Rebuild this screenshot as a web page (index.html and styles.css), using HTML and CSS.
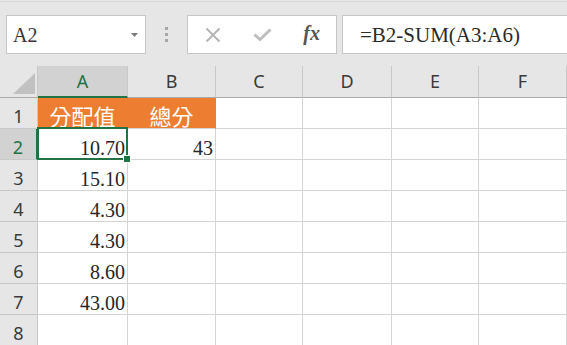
FILE: index.html
```html
<!DOCTYPE html>
<html lang="zh-Hant">
<head>
<meta charset="utf-8">
<title>Excel</title>
<link rel="stylesheet" href="styles.css">
</head>
<body>
<div class="app">
  <div class="fbar">
    <div class="namebox">
      <span class="namebox-text">A2</span>
      <svg class="dd" width="7" height="4" viewBox="0 0 7 4"><path d="M0 0H7L3.5 4Z" fill="#7a7a7a"/></svg>
    </div>
    <div class="grip"><i></i><i></i><i></i></div>
    <div class="btnbox">
      <span class="btn">
        <svg width="16" height="16" viewBox="0 0 16 16"><path d="M1.5 1.5L14.5 14.5M14.5 1.5L1.5 14.5" stroke="#b3b3b3" stroke-width="1.8" fill="none"/></svg>
      </span>
      <span class="btn">
        <svg width="19" height="14" viewBox="0 0 19 14"><path d="M1.5 6.5L7 11.5L17.5 1.5" stroke="#bdbdbd" stroke-width="3" fill="none"/></svg>
      </span>
      <span class="btn fx">fx</span>
    </div>
    <div class="formula">=B2-SUM(A3:A6)</div>
  </div>
  <div class="sheet">
    <div class="corner"><svg width="22" height="21" viewBox="0 0 22 21"><path d="M22 0V21H0Z" fill="#c1c1c1"/></svg></div>
    <div class="ch sel-col">A</div>
    <div class="ch">B</div>
    <div class="ch">C</div>
    <div class="ch">D</div>
    <div class="ch">E</div>
    <div class="ch">F</div>

    <div class="rh">1</div>
    <div class="c hdr fillA">分配值</div>
    <div class="c hdr fillB">總分</div>
    <div class="c"></div><div class="c"></div><div class="c"></div><div class="c"></div>

    <div class="rh sel-row">2</div>
    <div class="c num">10.70</div>
    <div class="c num">43</div>
    <div class="c"></div><div class="c"></div><div class="c"></div><div class="c"></div>

    <div class="rh">3</div>
    <div class="c num">15.10</div>
    <div class="c"></div><div class="c"></div><div class="c"></div><div class="c"></div><div class="c"></div>

    <div class="rh">4</div>
    <div class="c num">4.30</div>
    <div class="c"></div><div class="c"></div><div class="c"></div><div class="c"></div><div class="c"></div>

    <div class="rh">5</div>
    <div class="c num">4.30</div>
    <div class="c"></div><div class="c"></div><div class="c"></div><div class="c"></div><div class="c"></div>

    <div class="rh">6</div>
    <div class="c num">8.60</div>
    <div class="c"></div><div class="c"></div><div class="c"></div><div class="c"></div><div class="c"></div>

    <div class="rh">7</div>
    <div class="c num">43.00</div>
    <div class="c"></div><div class="c"></div><div class="c"></div><div class="c"></div><div class="c"></div>

    <div class="rh">8</div>
    <div class="c"></div><div class="c"></div><div class="c"></div><div class="c"></div><div class="c"></div><div class="c"></div>

    <div class="selection"><span class="handle"></span></div>
  </div>
</div>
</body>
</html>
```

FILE: styles.css
```css
* { box-sizing: border-box; }
html, body { margin: 0; padding: 0; }
body {
  width: 567px;
  height: 345px;
  overflow: hidden;
  background: #e6e6e6;
  font-family: "Noto Sans", "Open Sans", sans-serif;
}
.app {
  width: 567px;
  height: 345px;
  overflow: hidden;
  background: #e6e6e6;
}

/* formula bar */
.fbar {
  display: flex;
  align-items: stretch;
  height: 65px;
  margin-top: 1px;
  border-top: 1px solid #d8d8d8;
  padding: 13px 0 12px 6px;
}
.namebox {
  width: 140px;
  background: #fff;
  border: 1px solid #c6c6c6;
  display: flex;
  align-items: center;
  justify-content: space-between;
  padding: 0 7px 0 6px;
}
.namebox-text {
  font-family: "Liberation Serif", serif;
  font-size: 20px;
  color: #333;
  padding-top: 2px;
}
.dd { margin-top: 1px; }
.grip {
  width: 41px;
  display: flex;
  flex-direction: column;
  align-items: center;
  justify-content: center;
  gap: 3px;
}
.grip i {
  display: block;
  width: 3px;
  height: 3px;
  background: #a6a6a6;
}
.btnbox {
  width: 150px;
  background: #fff;
  border: 1px solid #c6c6c6;
  display: flex;
  align-items: center;
}
.btn {
  width: 49px;
  display: flex;
  align-items: center;
  justify-content: center;
}
.btn:first-child { width: 51px; }
.fx {
  font-family: "Liberation Serif", serif;
  font-style: italic;
  font-weight: bold;
  font-size: 20px;
  color: #555;
  padding-bottom: 2px;
}
.formula {
  flex: 1;
  margin-left: 5px;
  margin-right: -10px;
  background: #fff;
  border: 1px solid #c6c6c6;
  font-family: "Liberation Serif", serif;
  font-size: 21px;
  color: #2b2b2b;
  display: flex;
  align-items: center;
  padding: 2px 0 0 17px;
}

/* sheet */
.sheet {
  position: relative;
  display: grid;
  grid-template-columns: 38px 90px 88px 87px 89px 87px 1fr;
  grid-template-rows: 32px repeat(8, 31px);
  background: #fff;
}
.corner {
  background: #e6e6e6;
  border-right: 1px solid #c8c8c8;
  border-bottom: 1px solid #ababab;
  display: flex;
  align-items: flex-end;
  justify-content: flex-end;
  padding: 0 2px 3px 0;
}
.ch {
  background: #e6e6e6;
  border-right: 1px solid #c8c8c8;
  border-bottom: 1px solid #ababab;
  display: flex;
  align-items: center;
  justify-content: center;
  font-size: 18px;
  color: #3a3a3a;
  padding-bottom: 1px;
}
.ch.sel-col {
  background: #d2d2d2;
  color: #217346;
  border-bottom: 2px solid #217346;
  padding-bottom: 0;
}
.rh {
  background: #e6e6e6;
  border-right: 1px solid #c8c8c8;
  border-bottom: 1px solid #c8c8c8;
  display: flex;
  align-items: center;
  justify-content: center;
  font-size: 18px;
  color: #3a3a3a;
  padding-top: 6px;
}
.rh.sel-row {
  background: #d2d2d2;
  color: #217346;
  border-right: 2px solid #217346;
}
.c {
  border-right: 1px solid #d4d4d4;
  border-bottom: 1px solid #d4d4d4;
  font-family: "Liberation Serif", "Noto Sans CJK TC", serif;
  font-size: 20px;
  color: #262626;
}
.num {
  display: flex;
  align-items: flex-end;
  justify-content: flex-end;
  line-height: 22px;
  padding-right: 2px;
}
.hdr {
  display: flex;
  align-items: center;
  justify-content: center;
  font-family: "Noto Sans CJK TC", sans-serif;
  font-size: 22px;
  color: #fff;
  background: #ed7d31;
  padding-top: 3px;
  line-height: 24px;
}
.fillA { border-right-color: #ed7d31; }
.fillB { border-right-color: #ed7d31; }

.selection {
  position: absolute;
  left: 37px;
  top: 61px;
  width: 91px;
  height: 33px;
  border: 2px solid #217346;
  pointer-events: none;
}
.handle {
  position: absolute;
  right: -5px;
  bottom: -5px;
  width: 8px;
  height: 8px;
  background: #217346;
  border: 1px solid #fff;
}
```
